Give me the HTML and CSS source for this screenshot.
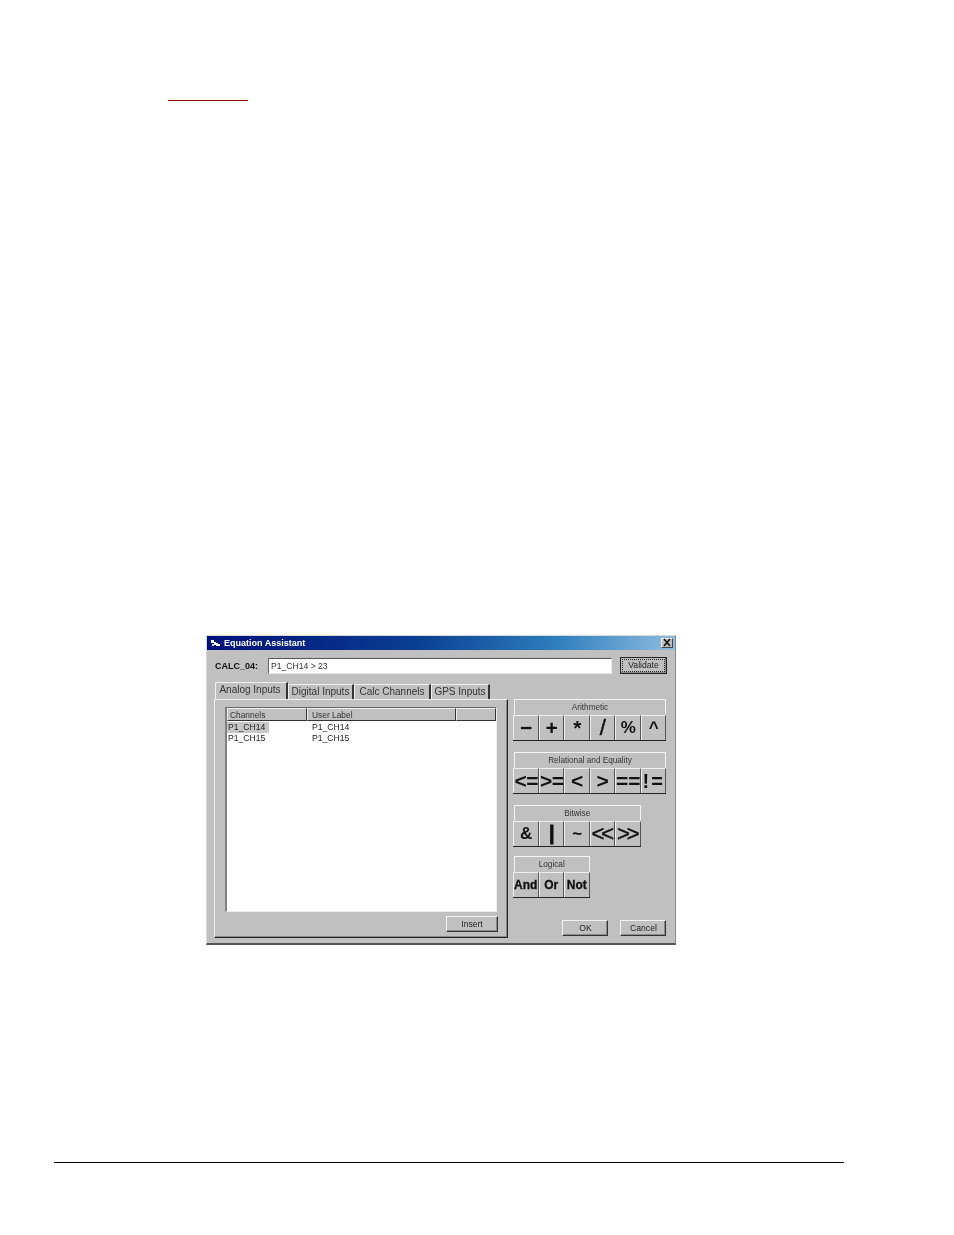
FILE: index.html
```html
<!DOCTYPE html>
<html lang="en">
<head>
<meta charset="utf-8">
<title>Equation Assistant</title>
<link rel="stylesheet" href="styles.css">
</head>
<body>
<div class="page">
  <div class="red-rule"></div>
  <section class="dialog">
    <header class="titlebar">
      <svg class="app-icon" width="9" height="8" viewBox="0 0 9 8"><path d="M0 1h3v2h2v1h2v1h2v2H5V6H3V4H0z" fill="#fff"/><path d="M1 5h2v2H1z" fill="#c8d0e0"/></svg>
      <span class="title-text">Equation Assistant</span>
      <span class="close"><svg width="10" height="9" viewBox="0 0 10 9"><path d="M2 1l6 7M8 1l-6 7" stroke="#111" stroke-width="1.6" fill="none"/></svg></span>
    </header>
    <div class="calc-row">
      <label class="calc-label">CALC_04:</label>
      <div class="calc-input">P1_CH14 &gt; 23</div>
      <button class="btn btn-default"><span class="focus">Validate</span></button>
    </div>
    <div class="main">
      <div class="left">
        <div class="tabs">
          <div class="tab tab-active t1">Analog Inputs</div>
          <div class="tab t2">Digital Inputs</div>
          <div class="tab t3">Calc Channels</div>
          <div class="tab t4">GPS Inputs</div>
        </div>
        <div class="panel">
          <div class="list">
            <div class="list-head">
              <div class="hcell c1">Channels</div>
              <div class="hcell c2">User Label</div>
              <div class="hcell c3"></div>
            </div>
            <div class="row"><span class="cell c1"><span class="sel">P1_CH14</span></span><span class="cell c2">P1_CH14</span></div>
            <div class="row"><span class="cell c1"><span class="plain">P1_CH15</span></span><span class="cell c2">P1_CH15</span></div>
          </div>
          <button class="btn btn-insert">Insert</button>
        </div>
      </div>
      <div class="right">
        <div class="group g-arith">
          <div class="group-label">Arithmetic</div>
          <div class="ops">
            <button class="op">&minus;</button><button class="op">+</button><button class="op">*</button><button class="op op-slash">/</button><button class="op op-small">%</button><button class="op op-tiny">^</button>
          </div>
        </div>
        <div class="group g-rel">
          <div class="group-label">Relational and Equality</div>
          <div class="ops">
            <button class="op op-wide">&lt;=</button><button class="op op-wide">&gt;=</button><button class="op">&lt;</button><button class="op">&gt;</button><button class="op">==</button><button class="op op-spaced">!=</button>
          </div>
        </div>
        <div class="group g-bit">
          <div class="group-label">Bitwise</div>
          <div class="ops">
            <button class="op op-small">&amp;</button><button class="op op-bar">|</button><button class="op op-tiny">~</button><button class="op op-chev">&lt;&lt;</button><button class="op op-chev">&gt;&gt;</button>
          </div>
        </div>
        <div class="group g-log">
          <div class="group-label">Logical</div>
          <div class="ops">
            <button class="op op-word">And</button><button class="op op-word">Or</button><button class="op op-word">Not</button>
          </div>
        </div>
        <div class="footer">
          <button class="btn btn-foot">OK</button>
          <button class="btn btn-foot">Cancel</button>
        </div>
      </div>
    </div>
  </section>
  <div class="bottom-rule"></div>
</div>
</body>
</html>
```
FILE: styles.css
```css
* { box-sizing: border-box; }
html, body { margin: 0; padding: 0; background: #fff; }
body { font-family: "Liberation Sans", Arial, sans-serif; color: #111; }
.page { width: 954px; height: 1235px; padding-top: 100px; overflow: hidden; }
.red-rule { width: 80px; height: 1px; margin-left: 168px; background: #990000; }
.bottom-rule { width: 790px; height: 1px; margin-left: 54px; margin-top: 217px; background: #000; }

.dialog {
  width: 470px; height: 310px; margin: 534px 0 0 206px;
  background: #c0c0c0;
  border-top: 1px solid #d8d8d8; border-left: 1px solid #d8d8d8;
  border-right: 1px solid #8a8a8a; border-bottom: 2px solid #555;
  font-size: 8.6px;
  filter: blur(0.3px);
}
.titlebar {
  height: 14px; display: flex; align-items: center; padding: 0 2px 1px 4px;
  background: linear-gradient(to right, #00107a 0%, #0a3f92 45%, #2f7fbe 75%, #8fbcdf 100%);
  color: #fff;
}
.app-icon { margin-right: 4px; }
.title-text { font-weight: bold; font-size: 9px; }
.close {
  margin-left: auto; width: 12px; height: 10px; display: flex; align-items: center; justify-content: center;
  background: #c0c0c0; border: 1px solid; border-color: #eee #444 #444 #eee;
}

.calc-row { display: flex; align-items: center; height: 17px; margin: 7px 0 0 7px; }
.calc-label { width: 54px; padding-left: 1px; font-weight: bold; font-size: 9px; }
.calc-input {
  width: 344px; height: 16px; padding: 1px 2px; line-height: 13px; background: #fff;
  border: 1px solid; border-color: #555 #e8e8e8 #e8e8e8 #666; color: #333;
}
.btn {
  font: inherit; color: #222; padding: 0; background: #c0c0c0;
  border: 1px solid; border-color: #f2f2f2 #333 #333 #f2f2f2;
  box-shadow: inset -1px -1px 0 #8a8a8a;
}
.btn-default { width: 47px; height: 17px; margin-left: 8px; border-color: #222; padding: 1px; }
.focus { display: block; height: 13px; line-height: 11px; border: 1px dotted #222; }

.main { display: flex; margin: 8px 0 0 7px; gap: 5px; }
.left { width: 294px; }
.tabs { display: flex; align-items: flex-end; height: 17px; padding-left: 1px; }
.tab {
  height: 15px; line-height: 14px; text-align: center; color: #333; font-size: 10px;
  border-top: 1px solid #efefef; border-left: 1px solid #efefef; border-right: 2px solid #333;
}
.tab-active { height: 17px; line-height: 14px; padding-right: 2px; }
.t1 { width: 73px; }
.t2 { width: 66px; }
.t3 { width: 77px; }
.t4 { width: 59px; }

.panel {
  height: 239px; padding: 7px 10px 0 10px; display: flex; flex-direction: column; align-items: flex-end;
  border: 1px solid; border-color: #efefef #222 #222 #efefef;
  box-shadow: inset -1px -1px 0 #8a8a8a;
}
.list {
  width: 272px; height: 205px; background: #fff;
  border-style: solid; border-width: 1px 1px 1px 2px; border-color: #666 #eee #eee #808080;
}
.list-head { display: flex; height: 14px; }
.hcell {
  height: 13px; line-height: 12px; padding-left: 2px; background: #c0c0c0; color: #333; font-size: 8.4px;
  border: 1px solid; border-color: #eee #333 #333 #eee;
}
.c1 { width: 80px; }
.c2 { width: 149px; }
.c3 { width: 40px; }
.hcell.c2 { padding-left: 4px; }
.row { display: flex; height: 11px; line-height: 11px; color: #222; }
.cell { display: block; }
.cell.c2 { padding-left: 5px; }
.sel { display: block; width: 42px; padding-left: 1px; background: #c8c8c8; }
.plain { display: block; padding-left: 1px; }
.btn-insert { width: 52px; height: 16px; margin: 4px -1px 0 0; padding-bottom: 1px; }

.right { width: 153px; display: flex; flex-direction: column; padding-top: 17px; }
.group-label {
  height: 16px; line-height: 16px; text-align: center; color: #333; font-size: 8.2px; margin-left: 1px;
  border: 1px solid; border-color: #f4f4f4 #f4f4f4 transparent #f4f4f4;
}
.ops { display: flex; height: 26px; border-bottom: 1px solid #222; }
.op {
  width: 25.5px; height: 25px; padding: 0 0 0 1px; background: #c0c0c0; color: #111;
  font-family: "Liberation Sans", Arial, sans-serif; font-weight: bold; font-size: 21px; line-height: 20px; white-space: nowrap;
  display: flex; align-items: center; justify-content: center; overflow: visible;
  border: 0; border-left: 1px solid #efefef; border-top: 1px solid #efefef; border-right: 1px solid #555;
}
.op-small { font-size: 17px; }
.op-tiny { font-size: 17px; }
.op-slash { font-size: 22px; font-weight: normal; -webkit-text-stroke: 0.5px #111; transform-origin: center; }
.op-wide { letter-spacing: -0.5px; }
.op-spaced { letter-spacing: 2px; font-size: 20px; }
.op-bar { font-size: 20px; -webkit-text-stroke: 0.8px #111; padding-bottom: 3px; }
.op-chev { font-size: 22px; letter-spacing: -3px; padding-right: 3px; font-weight: normal; -webkit-text-stroke: 0.4px #111; }
.op-word { font-size: 12px; padding-left: 0; -webkit-text-stroke: 0.3px #111; }
.g-rel { margin-top: 11px; }
.g-bit { margin-top: 11px; }
.g-log { margin-top: 9px; }
.g-arith { width: 153px; }
.g-rel { width: 153px; }
.g-bit { width: 127.5px; }
.g-log { width: 76.5px; }
.footer { margin-top: auto; margin-bottom: 2px; display: flex; justify-content: flex-end; gap: 12px; }
.btn-foot { width: 46px; height: 16px; padding: 0 0 1px 1px; }
```
